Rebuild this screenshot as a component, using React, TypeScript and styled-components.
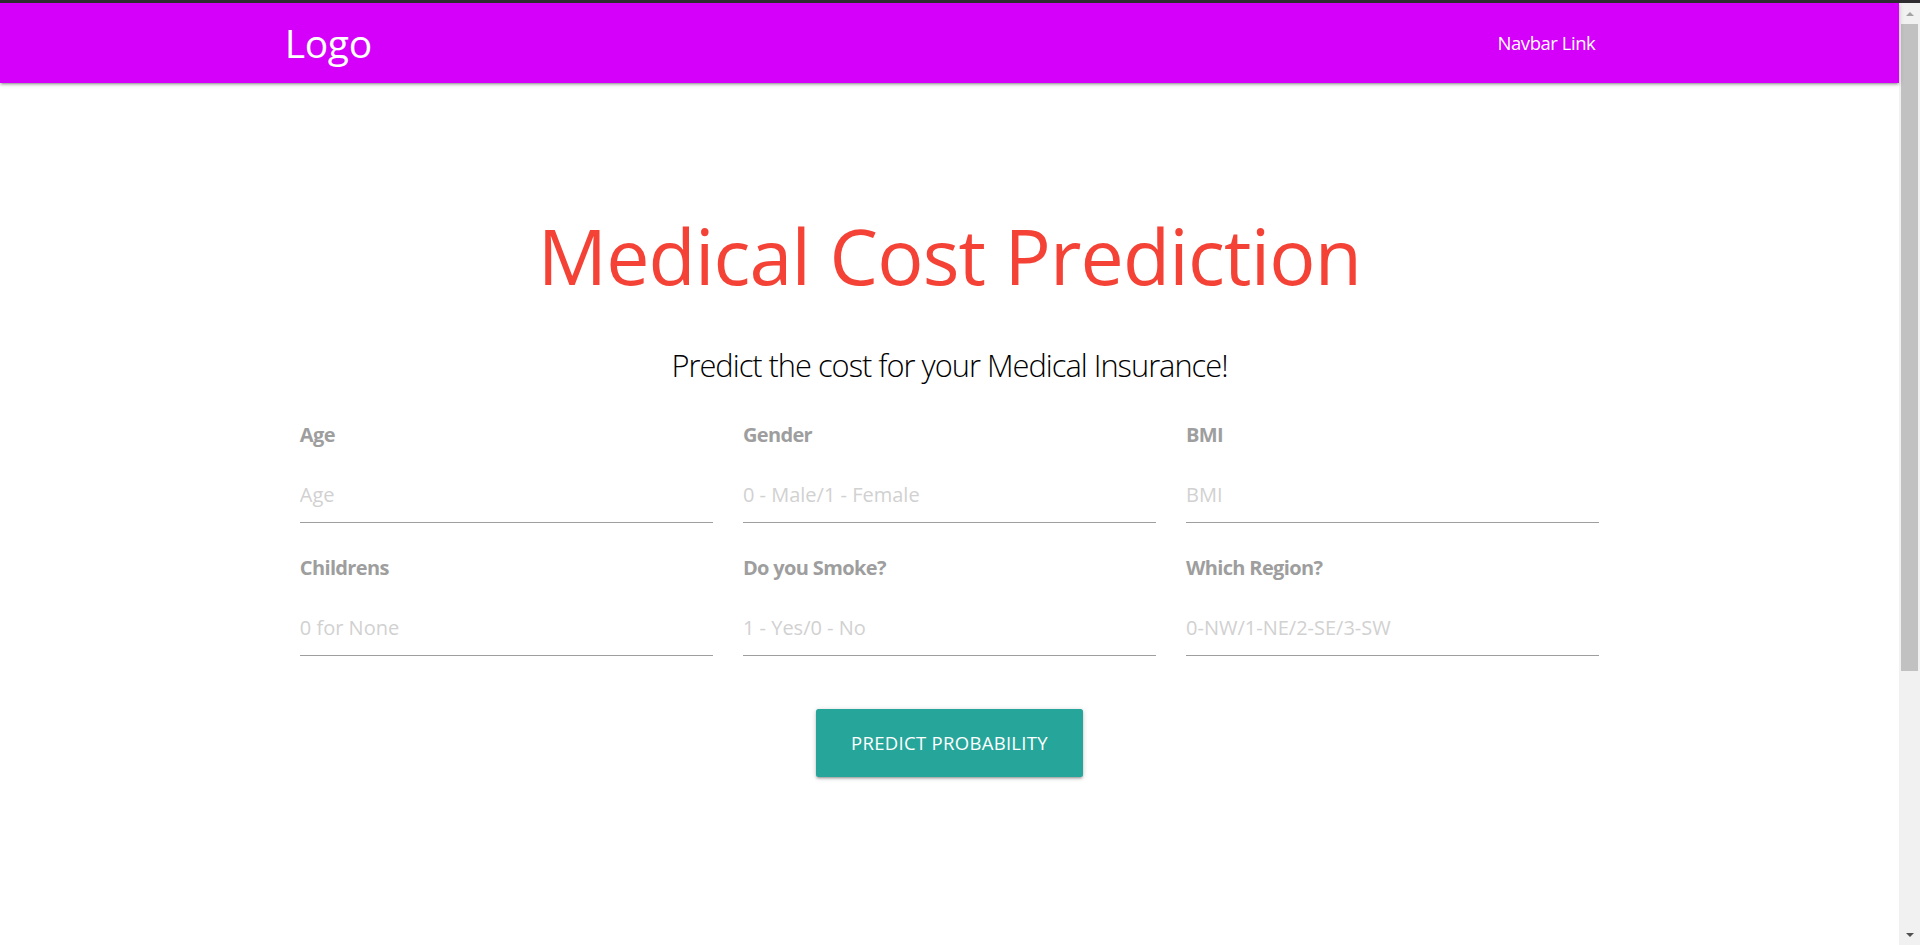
import React from "react";
import styled, { createGlobalStyle } from "styled-components";

const FONT = `"Open Sans", "Noto Sans", Arial, sans-serif`;

const GlobalStyle = createGlobalStyle`
  html, body { margin: 0; padding: 0; background: #fff; overflow: hidden; }
  body {
    font-family: ${FONT};
    color: rgba(0,0,0,0.87);
    border-top: 3px solid #2e2c31;
  }
`;

const Shell = styled.div`
  display: flex;
  height: calc(100vh - 3px);
`;

const Main = styled.div`
  flex: 1;
  min-width: 0;
`;

/* Browser scrollbar as seen in the screenshot */
const ScrollBar = styled.div`
  flex: none;
  width: 21px;
  display: flex;
  flex-direction: column;
  background: #f1f1f1;
`;

const ScrollButton = styled.div<{ $dir: "up" | "down" }>`
  height: 21px;
  display: flex;
  align-items: center;
  justify-content: center;
  &::before {
    content: "";
    width: 0;
    height: 0;
    border-left: 4px solid transparent;
    border-right: 4px solid transparent;
    ${(p) =>
      p.$dir === "up"
        ? "border-bottom: 4px solid #a3a3a3;"
        : "border-top: 4px solid #505050;"}
  }
`;

const ScrollTrack = styled.div`
  flex: 1;
  padding: 0 2px;
`;

const ScrollThumb = styled.div`
  height: 647px;
  background: #c1c1c1;
`;

const Nav = styled.nav`
  position: relative;
  z-index: 1;
  height: 80px;
  background: #d500f9;
  color: #fff;
  box-shadow: 0 2px 2px 0 rgba(0,0,0,.14), 0 3px 1px -2px rgba(0,0,0,.12), 0 1px 5px 0 rgba(0,0,0,.2);
`;

const Container = styled.div`
  width: 70%;
  margin: 0 auto;
`;

const NavInner = styled(Container)`
  height: 100%;
  display: flex;
  align-items: center;
  justify-content: space-between;
`;

const Brand = styled.a`
  font-size: 39px;
  letter-spacing: -0.4px;
  line-height: 80px;
  color: #fff;
  text-decoration: none;
`;

const NavLink = styled.a`
  font-size: 18.5px;
  letter-spacing: -0.45px;
  line-height: 80px;
  padding: 0 18.75px;
  color: #fff;
  text-decoration: none;
`;

const Title = styled.h1`
  margin: 127px 0 0;
  font-size: 77px;
  letter-spacing: -0.8px;
  line-height: 92.4px;
  font-weight: 400;
  text-align: center;
  color: #f44336;
`;

const Subtitle = styled.h5`
  margin: 44.6px 0 0;
  font-size: 30.8px;
  letter-spacing: -1px;
  line-height: 36px;
  font-weight: 300;
  text-align: center;
  color: #000;
`;

const FormGrid = styled.div`
  display: grid;
  grid-template-columns: repeat(3, 1fr);
  row-gap: 33px;
  margin-top: 40px;
`;

const Field = styled.div`
  padding: 0 15px;
  display: flex;
  flex-direction: column;
`;

const Label = styled.label`
  font-size: 20px;
  letter-spacing: -0.65px;
  line-height: 24px;
  font-weight: 700;
  color: #9e9e9e;
`;

const Input = styled.input`
  margin-top: 15px;
  padding: 5px 0 0;
  box-sizing: content-box;
  height: 55px;
  border: none;
  border-bottom: 1px solid #9e9e9e;
  border-radius: 0;
  outline: none;
  background: transparent;
  font-family: ${FONT};
  font-size: 20px;
  color: rgba(0,0,0,0.87);
  &::placeholder { color: #d1d1d1; }
`;

const Actions = styled.div`
  display: flex;
  justify-content: center;
  margin-top: 53px;
`;

const Button = styled.button`
  height: 67.5px;
  padding: 0 35px;
  border: none;
  border-radius: 2.5px;
  background: #26a69a;
  color: #fff;
  font-family: ${FONT};
  font-size: 18.5px;
  letter-spacing: 0.3px;
  text-transform: uppercase;
  cursor: pointer;
  box-shadow: 0 2px 2px 0 rgba(0,0,0,.14), 0 3px 1px -2px rgba(0,0,0,.12), 0 1px 5px 0 rgba(0,0,0,.2);
`;

const fields = [
  { label: "Age", placeholder: "Age" },
  { label: "Gender", placeholder: "0 - Male/1 - Female" },
  { label: "BMI", placeholder: "BMI" },
  { label: "Childrens", placeholder: "0 for None" },
  { label: "Do you Smoke?", placeholder: "1 - Yes/0 - No" },
  { label: "Which Region?", placeholder: "0-NW/1-NE/2-SE/3-SW" },
];

export default function App() {
  return (
    <>
      <GlobalStyle />
      <Shell>
        <Main>
          <Nav>
            <NavInner>
              <Brand href="#">Logo</Brand>
              <NavLink href="#">Navbar Link</NavLink>
            </NavInner>
          </Nav>
          <Container>
            <Title>Medical Cost Prediction</Title>
            <Subtitle>Predict the cost for your Medical Insurance!</Subtitle>
            <FormGrid>
              {fields.map((f) => (
                <Field key={f.label}>
                  <Label>{f.label}</Label>
                  <Input type="text" placeholder={f.placeholder} />
                </Field>
              ))}
            </FormGrid>
            <Actions>
              <Button type="button">Predict Probability</Button>
            </Actions>
          </Container>
        </Main>
        <ScrollBar>
          <ScrollButton $dir="up" />
          <ScrollTrack>
            <ScrollThumb />
          </ScrollTrack>
          <ScrollButton $dir="down" />
        </ScrollBar>
      </Shell>
    </>
  );
}
